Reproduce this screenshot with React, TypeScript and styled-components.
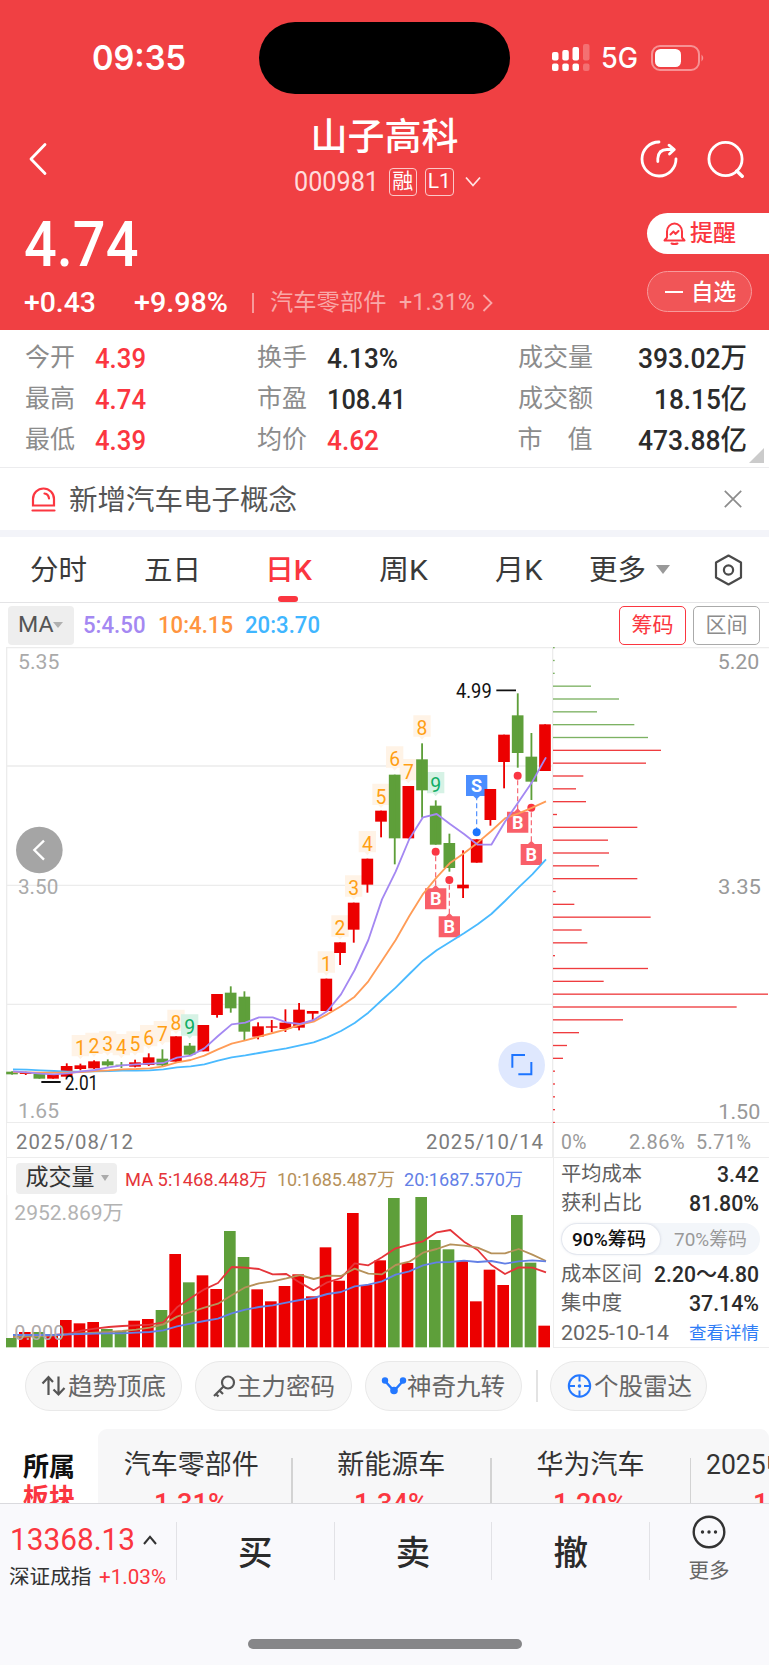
import React, { useLayoutEffect, useRef, useState } from "react";
import styled, { createGlobalStyle } from "styled-components";

const RED = "#fb3640";
const UP = "#ec0000";
const DOWN = "#5e9f3a";
const FONT = `Roboto, "Noto Sans CJK SC", sans-serif`;

const Global = createGlobalStyle`
  * { box-sizing: border-box; }
  body { margin: 0; background: #fff; font-family: ${FONT}; color: #333; }
  svg { display: block; flex: none; }
`;

/* ---------- text that is condensed or widened to a given width ---------- */

const FitBox = styled.div<{ $w: number; $ml: number }>`
  flex: none;
  width: ${(p) => p.$w}px;
  margin-left: ${(p) => p.$ml}px;
  white-space: nowrap;
`;
const FitInner = styled.span`
  display: inline-block;
  transform-origin: 0 50%;
`;

type FitProps = { w: number; ml?: number; className?: string; children: React.ReactNode };

function Fit({ w, ml = 0, className, children }: FitProps) {
  const ref = useRef<HTMLSpanElement>(null);
  const [scale, setScale] = useState(1);
  useLayoutEffect(() => {
    if (ref.current && ref.current.offsetWidth) setScale((w / ref.current.getBoundingClientRect().width) * scale);
  }, [w]);
  return (
    <FitBox className={className} $w={w} $ml={ml}>
      <FitInner ref={ref} style={{ transform: `scaleX(${scale})` }}>{children}</FitInner>
    </FitBox>
  );
}

/* ---------- page ---------- */

const Page = styled.div`
  width: 769px;
  height: 1665px;
  overflow: hidden;
  display: flex;
  flex-direction: column;
  background: #fff;
`;

const Header = styled.header`
  height: 330px;
  flex: none;
  background: #f04043;
  color: #fff;
`;
const StatusBar = styled.div`
  height: 113px;
  padding: 22px 0 19px 93px;
  display: flex;
  align-items: center;
`;
const Clock = styled(Fit)`
  font: 600 34px/40px Inter, sans-serif;
`;
const Island = styled.div`
  width: 251px;
  height: 72px;
  margin-left: 72.5px;
  border-radius: 36px;
  background: #000;
`;
const Network = styled(Fit)`
  font: 500 28px/40px Inter, sans-serif;
`;
const StatusIcon = styled.svg<{ $ml: number }>`
  margin-left: ${(p) => p.$ml}px;
`;

const NavBar = styled.nav`
  height: 92px;
  display: grid;
  grid-template-columns: 290px 349.7px auto;
  align-items: center;
`;
const BackIcon = styled.svg`
  margin-left: 29px;
`;
const StockName = styled(Fit)`
  padding-top: 2px;
  height: 45px;
  font-size: 37px;
  font-weight: 500;
  line-height: 45px;
`;
const CodeRow = styled.div`
  height: 47px;
  display: flex;
  align-items: center;
`;
const Code = styled(Fit)`
  font-size: 27px;
  line-height: 30px;
  color: #ffdcdc;
`;
const Badge = styled.div<{ $ml: number; $w: number }>`
  width: ${(p) => p.$w}px;
  height: 28px;
  margin-left: ${(p) => p.$ml}px;
  border: 1.5px solid #fbc8c8;
  border-radius: 4px;
  font-size: 21px;
  line-height: 25px;
  text-align: center;
`;
const NavActions = styled.div`
  display: flex;
  gap: 29px;
`;

const Quote = styled.div`
  display: flex;
  justify-content: space-between;
`;
const Price = styled(Fit)`
  font-size: 63px;
  font-weight: 500;
  line-height: 80px;
`;
const ChangeRow = styled.div`
  height: 36px;
  display: flex;
  align-items: center;
`;
const Change = styled(Fit)`
  font-size: 28px;
  font-weight: 500;
  line-height: 34px;
`;
const ChangeDivider = styled.i`
  width: 1.5px;
  height: 20px;
  margin-left: 24px;
  background: #f79a9b;
`;
const Sector = styled(Fit)`
  font-size: 23px;
  line-height: 34px;
  color: #f9a8a8;
`;
const QuoteActions = styled.div`
  width: 122.5px;
  padding-top: 8px;
  display: flex;
  flex-direction: column;
  gap: 17px;
`;
const AlertButton = styled.div`
  height: 41px;
  padding-left: 16.5px;
  display: flex;
  align-items: center;
  border-radius: 21px 0 0 21px;
  background: #fff;
  color: ${RED};
  font-size: 23px;
  line-height: 32px;
  font-weight: 500;
`;
const WatchButton = styled.div`
  width: 105.5px;
  height: 41px;
  padding-left: 17px;
  display: flex;
  align-items: center;
  border: 1.5px solid #f79a9b;
  border-radius: 21px;
  background: #f15557;
  font-size: 22.5px;
  line-height: 32px;
  font-weight: 500;
`;
const Minus = styled.i`
  width: 18px;
  height: 2px;
  margin-right: 8.5px;
  background: #fff;
`;

const Stats = styled.section`
  position: relative;
  height: 138px;
  flex: none;
  padding-top: 7px;
  display: grid;
  grid-template-columns: 232px 260.5px 1fr;
  padding-left: 25px;
  border-bottom: 1.5px solid #ececee;
`;
const StatRow = styled.div`
  height: 41px;
  display: flex;
  align-items: center;
`;
const StatLabel = styled(Fit)`
  font-size: 25px;
  line-height: 36px;
  color: #8c8c8c;
`;
const StatValue = styled(Fit)<{ $up?: boolean }>`
  padding-top: 2px;
  font-size: 28px;
  font-weight: 500;
  line-height: 36px;
  color: ${(p) => (p.$up ? RED : "#2b2b2b")};
`;
const WideStatRow = styled(StatRow)`
  justify-content: space-between;
  padding-right: 22px;
`;
const SplitLabel = styled.div`
  width: 75px;
  display: flex;
  justify-content: space-between;
  font-size: 25px;
  line-height: 36px;
  color: #8c8c8c;
`;
const Corner = styled.i`
  position: absolute;
  right: 5px;
  bottom: 4px;
  border-style: solid;
  border-width: 0 0 15px 15px;
  border-color: transparent transparent #cbcbcb transparent;
`;

const Notice = styled.section`
  height: 62px;
  flex: none;
  padding: 0 27.5px 0 31px;
  display: flex;
  align-items: center;
`;
const NoticeText = styled(Fit)`
  flex: 1;
  padding-top: 3px;
  font-size: 28.5px;
  line-height: 40px;
  color: #555;
`;
const Band = styled.div`
  height: 7px;
  flex: none;
  background: #f3f4f9;
`;

const Tabs = styled.nav`
  height: 66px;
  flex: none;
  display: flex;
  align-items: center;
  border-bottom: 1.5px solid #e4e4e6;
`;
const Tab = styled(Fit)<{ $active?: boolean }>`
  position: relative;
  height: 64px;
  font-size: 28.5px;
  font-weight: ${(p) => (p.$active ? 500 : 400)};
  line-height: 66px;
  color: ${(p) => (p.$active ? RED : "#3a3a3a")};
  ${(p) =>
    p.$active &&
    `&::after { content: ""; position: absolute; left: 13px; bottom: 0; width: 20px; height: 6px; border-radius: 3px; background: ${RED}; }`}
`;
const Triangle = styled.i<{ $size: number; $ml: number; $c?: string }>`
  margin-left: ${(p) => p.$ml}px;
  border-style: solid;
  border-width: ${(p) => p.$size * 1.35}px ${(p) => p.$size}px 0;
  border-color: ${(p) => p.$c || "#999"} transparent transparent;
`;
const SettingsIcon = styled.svg`
  margin-left: 43.5px;
`;

const MaBar = styled.div`
  height: 44px;
  flex: none;
  padding-left: 8px;
  display: flex;
  align-items: center;
`;
const MaSelect = styled.div`
  width: 66px;
  height: 39px;
  display: flex;
  align-items: center;
  border-radius: 4px;
  background: #eee;
  color: #555;
  font-size: 22px;
  line-height: 30px;
`;
const MaValue = styled(Fit)<{ $c: string }>`
  padding-top: 1px;
  font-size: 23px;
  line-height: 36px;
  font-weight: 500;
  color: ${(p) => p.$c};
`;
const ToggleButton = styled.div<{ $ml: number; $on?: boolean }>`
  width: 66.5px;
  height: 39px;
  margin-left: ${(p) => p.$ml}px;
  display: flex;
  align-items: center;
  justify-content: center;
  border: 1.5px solid ${(p) => (p.$on ? RED : "#aaa")};
  border-radius: 5px;
  color: ${(p) => (p.$on ? RED : "#8c8c8c")};
  font-size: 21px;
  line-height: 30px;
`;

const DateRow = styled.div`
  height: 35px;
  flex: none;
  margin-left: 6px;
  display: flex;
  align-items: center;
  border: 1.5px solid #ededed;
  border-width: 0 0 1.5px 1.5px;
`;
const DateText = styled(Fit)`
  padding-top: 4px;
  font-size: 21px;
  line-height: 30px;
  letter-spacing: 1px;
  color: #7c7c7c;
`;
const Scale = styled(DateText)`
  letter-spacing: 0.5px;
  color: #999;
`;
const DateSplit = styled.i`
  width: 1.5px;
  height: 35px;
  margin-left: 8px;
  background: #ededed;
`;

const Lower = styled.section`
  height: 190px;
  flex: none;
  display: flex;
`;
const Volume = styled.div`
  width: 553.5px;
  border-right: 1.5px solid #ededed;
`;
const VolumeBar = styled.div`
  height: 37px;
  margin-left: 6px;
  padding-left: 8.5px;
  display: flex;
  align-items: center;
  border-left: 1.5px solid #ededed;
`;
const VolumeSelect = styled.div`
  width: 101px;
  height: 31px;
  margin-top: 3px;
  display: flex;
  align-items: center;
  border-radius: 4px;
  background: #eee;
  font-size: 23px;
  line-height: 30px;
`;
const VolumeMa = styled(Fit)<{ $c: string }>`
  padding-top: 7px;
  font-size: 18.5px;
  line-height: 26px;
  color: ${(p) => p.$c};
`;

const Chips = styled.div`
  flex: 1;
  padding: 1px 10px 0 7px;
  border-bottom: 1.5px solid #ededed;
`;
const ChipRow = styled.div<{ $h: number }>`
  height: ${(p) => p.$h}px;
  display: flex;
  align-items: center;
  justify-content: space-between;
`;
const ChipLabel = styled(Fit)`
  font-size: 20px;
  line-height: 28px;
  color: #606060;
`;
const ChipValue = styled(Fit)`
  font-size: 22.5px;
  font-weight: 500;
  line-height: 28px;
  color: #2b2b2b;
`;
const ChipDate = styled(Fit)`
  font-size: 20px;
  line-height: 28px;
  color: #666;
`;
const DetailLink = styled(Fit)`
  font-size: 17.3px;
  line-height: 28px;
  color: #2f7df6;
`;
const Switch = styled.div`
  height: 32px;
  margin: 6px -1px 4px 0;
  display: flex;
  align-items: center;
  border-radius: 16px;
  background: #f3f6fa;
`;
const Knob = styled.div`
  width: 98px;
  height: 30px;
  margin-left: 1px;
  padding-left: 10.5px;
  border-radius: 15px;
  background: #fff;
  box-shadow: 0 0 3px rgba(120, 130, 160, 0.35);
`;
const SwitchText = styled(Fit)<{ $on?: boolean }>`
  font-size: 19px;
  line-height: 31px;
  font-weight: ${(p) => (p.$on ? 500 : 400)};
  color: ${(p) => (p.$on ? "#111" : "#999")};
`;

const Pills = styled.section`
  height: 81px;
  flex: none;
  padding: 13px 0 18px 25px;
  display: flex;
  align-items: center;
`;
const Pill = styled.div<{ $mr?: number }>`
  width: 157px;
  height: 50px;
  margin-right: ${(p) => p.$mr || 0}px;
  padding-left: 15px;
  display: flex;
  align-items: center;
  border: 1.5px solid #e9e9e9;
  border-radius: 25px;
  background: #f7f7f7;
`;
const PillText = styled(Fit)`
  padding-top: 1.5px;
  font-size: 24.4px;
  line-height: 36px;
  color: #666;
`;
const PillDivider = styled.i`
  width: 1.5px;
  height: 32px;
  margin-right: 12.5px;
  background: #e3e3e3;
`;

const Sectors = styled.section`
  height: 74px;
  flex: none;
  overflow: hidden;
  display: flex;
`;
const SectorTitle = styled.div`
  width: 98px;
  padding: 23px 0 0 23px;
  flex: none;
  font-size: 26px;
  font-weight: 700;
  line-height: 31px;
  color: #111;
`;
const SectorAccent = styled.div`
  color: ${RED};
`;
const SectorList = styled.div`
  width: 671px;
  display: flex;
  overflow: hidden;
  border-radius: 9px 9px 0 0;
  background: #f7f7f8;
`;
const SectorItem = styled.div<{ $w?: number }>`
  position: relative;
  width: ${(p) => p.$w || 199.3}px;
  flex: none;
  padding-top: 15px;
  display: flex;
  flex-direction: column;
  align-items: center;
  &:not(:last-child)::after {
    content: "";
    position: absolute;
    right: 0;
    top: 29px;
    width: 1.5px;
    height: 50px;
    background: #d3d3d3;
  }
`;
const SectorName = styled(Fit)`
  font-size: 27px;
  line-height: 42px;
  color: #333;
`;
const SectorChange = styled(Fit)`
  font-size: 27px;
  line-height: 36px;
  font-weight: 500;
  color: ${RED};
`;

const Footer = styled.footer`
  height: 162px;
  flex: none;
  border-top: 1.5px solid #dadade;
  background: #f9f9fc;
`;
const FooterBar = styled.div`
  height: 96px;
  display: flex;
`;
const IndexBox = styled.div`
  width: 176px;
  padding: 17px 0 0 9px;
`;
const IndexRow = styled.div`
  height: 37px;
  display: flex;
  align-items: center;
`;
const IndexValue = styled(Fit)`
  font-size: 31px;
  line-height: 38px;
  color: ${RED};
`;
const IndexName = styled(Fit)`
  font-size: 20.6px;
  line-height: 30px;
  color: #333;
`;
const IndexChange = styled(Fit)`
  font-size: 20.5px;
  line-height: 30px;
  color: ${RED};
`;
const Trade = styled.div`
  width: 157.7px;
  height: 58px;
  margin-top: 18px;
  padding-top: 9px;
  border-left: 1.5px solid #e2e2e6;
  text-align: center;
  font-size: 34.5px;
  line-height: 44px;
  font-weight: 500;
  color: #2b2b2b;
`;
const More = styled(Trade)`
  width: 119px;
  padding-top: 0;
  display: flex;
  flex-direction: column;
  align-items: center;
  font-size: 20.5px;
  line-height: 30px;
  font-weight: 400;
  color: #666;
  svg { margin: -7px 0 7px; }
`;
const HomeIndicator = styled.div`
  width: 274px;
  height: 10px;
  margin: 39px auto 0;
  border-radius: 5px;
  background: #868688;
`;

/* ---------- chart data, in thirds of a pixel ---------- */

const STEP = 41;
// [direction, open/close top, open/close bottom, high, low]
const candles: [0 | 1, number, number, number, number][] = [
  [0, 1274, 1282, 1273, 1283], [1, 1276, 1281, 1274, 1284], [0, 1281, 1295, 1281, 1295], [1, 1282, 1295, 1282, 1295],
  [1, 1257, 1289, 1249, 1291], [1, 1255, 1266, 1250, 1270], [1, 1243, 1264, 1240, 1266], [0, 1243, 1255, 1237, 1259],
  [0, 1253, 1256, 1245, 1263], [1, 1246, 1259, 1238, 1261], [1, 1231, 1254, 1219, 1257], [0, 1235, 1255, 1207, 1257],
  [1, 1168, 1244, 1168, 1244], [0, 1196, 1223, 1188, 1225], [1, 1134, 1213, 1134, 1213], [1, 1041, 1104, 1041, 1112],
  [0, 1037, 1084, 1018, 1097], [0, 1049, 1154, 1033, 1180], [1, 1138, 1169, 1126, 1177], [1, 1138, 1142, 1119, 1155],
  [1, 1127, 1146, 1087, 1155], [1, 1088, 1142, 1068, 1150], [1, 1092, 1100, 1092, 1119], [1, 995, 1092, 995, 1092],
  [1, 886, 918, 886, 954], [1, 767, 848, 767, 887], [1, 635, 713, 635, 737], [1, 491, 524, 491, 571],
  [0, 383, 574, 383, 652], [1, 417, 574, 417, 574], [0, 337, 430, 289, 512], [0, 476, 593, 460, 593],
  [0, 588, 663, 560, 674], [1, 713, 724, 610, 753], [1, 577, 647, 577, 647], [1, 426, 519, 426, 536],
  [1, 263, 345, 263, 424], [0, 205, 318, 139, 362], [0, 329, 404, 258, 459], [1, 232, 372, 232, 372],
];
const ma5 = [1273, 1276, 1280, 1282, 1279, 1273, 1269, 1261, 1255, 1252, 1250, 1248, 1232, 1226, 1204, 1167, 1132, 1127, 1111, 1111, 1126, 1131, 1119, 1092, 1042, 969, 879, 757, 674, 576, 511, 501, 532, 561, 593, 593, 524, 464, 404, 331];
const ma10 = [1275, 1276, 1277, 1277, 1277, 1275, 1272, 1270, 1267, 1266, 1264, 1258, 1246, 1239, 1226, 1207, 1190, 1180, 1169, 1158, 1147, 1133, 1124, 1102, 1078, 1049, 1003, 941, 879, 807, 741, 691, 647, 619, 587, 552, 514, 499, 482, 463];
const ma20 = [1267, 1268, 1270, 1272, 1274, 1274, 1273, 1272, 1271, 1271, 1270, 1267, 1261, 1258, 1252, 1241, 1231, 1225, 1218, 1211, 1204, 1195, 1186, 1171, 1152, 1128, 1097, 1059, 1022, 981, 941, 910, 884, 859, 832, 801, 762, 721, 682, 637];
// [candle index, tag top, label]
const tags: [number, number, string][] = [
  [5, 1164, "1"], [6, 1157, "2"], [7, 1153, "3"], [8, 1161, "4"], [9, 1153, "5"], [10, 1134, "6"], [11, 1122, "7"],
  [12, 1088, "8"], [13, 1102, "9"], [23, 913, "1"], [24, 805, "2"], [25, 685, "3"], [26, 552, "4"], [27, 410, "5"],
  [28, 298, "6"], [29, 336, "7"], [30, 205, "8"], [31, 375, "9"],
];
// [candle index, dot, box top, label]
const signals: [number, number, number, string][] = [
  [31, 614, 724, "B"], [32, 699, 808, "B"], [37, 386, 494, "B"], [38, 482, 591, "B"], [34, 556, 384, "S"],
];
const chips = [5, 5, 5, 114, 198, 132, 244, 285, 324, 279, 91, 69, 99, 12, 253, 165, 168, 138, 253, 8, 64, 293, 86, 103, 6, 285, 152, 645, 551, 210, 78, 42, 30, 6, 6, 6, 6, 6];

const volumes = [564, 546, 546, 558, 510, 520, 516, 537, 543, 512, 507, 480, 312, 397, 376, 417, 243, 321, 418, 454, 408, 373, 439, 292, 392, 189, 405, 331, 144, 339, 141, 270, 298, 333, 454, 359, 405, 195, 338, 527];
const vma5 = [556, 556, 555, 555, 552, 542, 536, 531, 528, 526, 524, 517, 472, 444, 418, 399, 351, 353, 357, 373, 372, 398, 421, 397, 384, 340, 346, 322, 295, 284, 274, 247, 240, 275, 300, 345, 372, 352, 353, 367];
const vma10 = [561, 560, 558, 556, 553, 550, 548, 546, 543, 539, 533, 523, 500, 486, 473, 461, 436, 412, 400, 394, 385, 375, 387, 377, 378, 356, 371, 373, 345, 335, 308, 297, 283, 287, 293, 310, 310, 297, 314, 333];
const vma20 = [555, 555, 555, 555, 553, 552, 551, 550, 550, 548, 546, 541, 529, 521, 513, 506, 490, 479, 471, 466, 458, 450, 444, 432, 426, 409, 404, 394, 374, 364, 346, 337, 336, 332, 336, 333, 341, 334, 331, 334];

const points = (ys: number[], dy = 0) => ys.map((y, i) => `${39 + STEP * i},${y + dy}`).join(" ");

const PriceChart = styled.svg`
  font-family: ${FONT};
`;

function Label({ x, y, w, size = 63, fill = "#aaa", children }: { x: number; y: number; w: number; size?: number; fill?: string; children: string }) {
  return (
    <text x={x} y={y} fontSize={size} fill={fill} textLength={w} lengthAdjust="spacingAndGlyphs">
      {children}
    </text>
  );
}

function KLine() {
  return (
    <PriceChart width="769" height="476" viewBox="0 0 2307 1428">
      <g stroke="#ececec" strokeWidth="4" fill="none">
        <path d="M20 2H2307M20 357H1659M20 715H1659M20 1072H1659M20 1427H2307M20 0V1428M1658 0V1428" />
      </g>
      {tags.map(([i, y, t], n) => {
        const green = t === "9";
        const x = 36 + STEP * i;
        return (
          <g key={n}>
            <path d={`M${x - 26} ${y}h52v64h-18l-8 9l-8-9h-18z`} fill={green ? "#d6f2e5" : "#fff3e6"} />
            <text x={x} y={y + 60} fontSize="58" textAnchor="middle" fill={green ? "#10ad64" : "#ff9f14"}>{t}</text>
          </g>
        );
      })}
      {signals.map(([i, dot, top, t], n) => {
        const x = 36 + STEP * i;
        const buy = t === "B";
        return (
          <g key={n}>
            <path d={buy ? `M${x} ${dot + 14}V${top}` : `M${x} ${dot}V${top + 70}`} stroke={buy ? "#f66470" : "#4a8cff"} strokeWidth="3.5" strokeDasharray="15 9" />
            <path
              d={buy ? `M${x - 32} ${top}h22l10-10l10 10h22v63h-64z` : `M${x - 32} ${top}h64v63h-22l-10 10l-10-10h-22z`}
              fill={buy ? "#f95f69" : "#4b8eff"}
            />
            <text x={x} y={top + 51} fontSize="54" fontWeight="700" textAnchor="middle" fill="#fff">{t}</text>
          </g>
        );
      })}
      {candles.map(([up, a, b, h, l], i) => {
        const x = 36 + STEP * i;
        return (
          <g key={i} fill={up ? UP : DOWN}>
            <rect x={x - 17.5} y={a} width="35" height={b - a} />
            <rect x={x - 2.5} y={h} width="5.5" height={l - h} />
          </g>
        );
      })}
      {signals.map(([i, dot, , t], n) => (
        <circle key={n} cx={36 + STEP * i} cy={dot} r="12" fill={t === "B" ? "#fa3643" : "#1b75ff"} />
      ))}
      <g fill="none" strokeWidth="5.5" strokeLinejoin="round">
        <polyline points={points(ma20)} stroke="#4abaff" />
        <polyline points={points(ma10)} stroke="#ff9c57" />
        <polyline points={points(ma5)} stroke="#a488f2" />
      </g>
      {chips.map((w, k) => (
        <rect key={k} x="1659" y={k * 38.5} width={w} height="4" fill={k < 8 ? "#7db263" : "#ef3c3f"} />
      ))}
      <path d="M1489 130h59M124 1305h58" stroke="#111" strokeWidth="5.5" />
      <Label x={1368} y={153} w={107} size={58} fill="#111">4.99</Label>
      <Label x={194} y={1329} w={101} size={58} fill="#111">2.01</Label>
      <Label x={54} y={66} w={124}>5.35</Label>
      <Label x={54} y={740} w={121}>3.50</Label>
      <Label x={54} y={1413} w={123}>1.65</Label>
      <Label x={2153} y={67} w={125} fill="#999">5.20</Label>
      <Label x={2154} y={742} w={129} fill="#999">3.35</Label>
      <Label x={2155} y={1415} w={126} fill="#999">1.50</Label>
      <circle cx="118" cy="609" r="70" fill="#a5a5a5" />
      <path d="M132 581L103 609L132 638" stroke="#fff" strokeWidth="7" fill="none" />
      <circle cx="1565" cy="1254" r="70" fill="#dfe8fe" />
      <path d="M1537 1262V1224H1575M1594 1245V1282H1555" stroke="#1d74ff" strokeWidth="6" fill="none" />
    </PriceChart>
  );
}

function VolumeChart() {
  return (
    <PriceChart width="552" height="153" viewBox="0 0 1656 459">
      <path d="M20 0V457" stroke="#ececec" strokeWidth="4" />
      {volumes.map((v, i) => {
        const x = i === 0 ? 18 : 16 + STEP * i;
        return <rect key={i} x={x} y={v - 135} width={i === 0 ? 32 : 35} height={592 - v} fill={candles[i][0] ? UP : DOWN} />;
      })}
      <g fill="none" strokeWidth="5.5" strokeLinejoin="round">
        <polyline points={points(vma5, -135)} stroke="#e5353a" />
        <polyline points={points(vma10, -135)} stroke="#b6915a" />
        <polyline points={points(vma20, -135)} stroke="#6380e6" />
      </g>
      <Label x={43} y={75} w={328} size={60} fill="#b3b3b3">2952.869万</Label>
      <Label x={43} y={436} w={150} size={62} fill="#b0aaaa">0.000</Label>
    </PriceChart>
  );
}

const smallStats = [
  [["今开", "4.39", 51, 1], ["最高", "4.74", 51, 1], ["最低", "4.39", 51, 1]],
  [["换手", "4.13%", 71, 0], ["市盈", "108.41", 79, 0], ["均价", "4.62", 52, 1]],
] as [string, string, number, number][][];

const bigStats: [string, string, number][] = [["成交量", "393.02万", 109], ["成交额", "18.15亿", 93], ["市值", "473.88亿", 109]];

const sectors: [string, string, number][] = [["汽车零部件", "1.31%", 135], ["新能源车", "1.34%", 108], ["华为汽车", "1.29%", 108]];

export default function App() {
  return (
    <Page>
      <Global />
      <Header>
        <StatusBar>
          <Clock w={94} ml={-1}>09:35</Clock>
          <Island />
          <StatusIcon $ml={42.2} width="38" height="28" viewBox="0 0 38 28" fill="#fff">
            <rect x="0" y="8" width="6.5" height="8.5" rx="2" />
            <rect x="10.3" y="6" width="6.5" height="10.5" rx="2" />
            <rect x="20.5" y="3" width="6.5" height="13.5" rx="2" />
            <rect x="31" y="0" width="6.5" height="16.5" rx="2" opacity=".25" />
            <rect x="0" y="19.5" width="6.5" height="7.5" rx="2" />
            <rect x="10.3" y="19.5" width="6.5" height="7.5" rx="2" />
            <rect x="20.5" y="19.5" width="6.5" height="7.5" rx="2" />
            <rect x="31" y="19.5" width="6.5" height="7.5" rx="2" opacity=".25" />
          </StatusIcon>
          <Network w={37} ml={11.5}>5G</Network>
          <StatusIcon $ml={12.8} width="55" height="26" viewBox="0 0 55 26">
            <rect x="1" y="1" width="47" height="24" rx="8" fill="none" stroke="#f79294" strokeWidth="2" />
            <rect x="4" y="4" width="26" height="18" rx="5.5" fill="#fff" />
            <path d="M50.5 9.5q3.5 3.5 0 7z" fill="#f79294" />
          </StatusIcon>
        </StatusBar>
        <NavBar>
          <BackIcon width="20" height="34" viewBox="0 0 20 34" fill="none" stroke="#fff" strokeWidth="2.8" strokeLinecap="round" strokeLinejoin="round">
            <path d="M16 2.5L2 17L16 31.5" />
          </BackIcon>
          <div>
            <StockName w={148} ml={20.5}>山子高科</StockName>
            <CodeRow>
              <Code w={85} ml={3.5}>000981</Code>
              <Badge $ml={10} $w={28.5}>融</Badge>
              <Badge $ml={7.5} $w={29.5}>L1</Badge>
              <StatusIcon $ml={10.5} width="16" height="12" viewBox="0 0 16 12" fill="none" stroke="#ffe3e3" strokeWidth="1.8">
                <path d="M1 1.5L8 9.5L15 1.5" />
              </StatusIcon>
            </CodeRow>
          </div>
          <NavActions>
            <svg width="38" height="38" viewBox="0 0 38 38" fill="none" stroke="#fff" strokeWidth="2.8" strokeLinecap="round" strokeLinejoin="round">
              <path d="M19 2A17 17 0 1 0 36 18.8" />
              <path d="M17.8 21.5V18.500Q18.500 9.500 27 9.500H33.500M29 5.200L34.300 9.500L29.500 14" />
            </svg>
            <svg width="38" height="38" viewBox="0 0 38 38" fill="none" stroke="#fff" strokeWidth="2.8" strokeLinecap="round">
              <circle cx="18.5" cy="19" r="16.6" />
              <path d="M29.8 31L35.2 36.2" strokeWidth="3.4" />
            </svg>
          </NavActions>
        </NavBar>
        <Quote>
          <div>
            <Price w={114.5} ml={24}>4.74</Price>
            <ChangeRow>
              <Change w={72} ml={24}>+0.43</Change>
              <Change w={94} ml={38}>+9.98%</Change>
              <ChangeDivider />
              <Sector w={116.5} ml={16.5}>汽车零部件</Sector>
              <Sector w={76} ml={12}>+1.31%</Sector>
              <StatusIcon $ml={7} width="12" height="18" viewBox="0 0 12 18" fill="none" stroke="#f9a8a8" strokeWidth="1.8">
                <path d="M1.5 1L9.5 9L1.5 17" />
              </StatusIcon>
            </ChangeRow>
          </div>
          <QuoteActions>
            <AlertButton>
              <svg width="23" height="23" viewBox="0 0 23 23" fill="none" stroke={RED} strokeWidth="2" strokeLinejoin="round" strokeLinecap="round">
                <path d="M1.5 18.5H21.5L19 15.5V9.5A7.5 8 0 0 0 4 9.5V15.5Z" />
                <path d="M8.5 21.5Q11.5 22.5 14.5 21.5M7.5 12.5L10.5 9.5L12.5 12L15.5 9" />
              </svg>
              <Fit w={46} ml={4}>提醒</Fit>
            </AlertButton>
            <WatchButton>
              <Minus />
              <Fit w={45}>自选</Fit>
            </WatchButton>
          </QuoteActions>
        </Quote>
      </Header>

      <Stats>
        {smallStats.map((col, c) => (
          <div key={c}>
            {col.map(([label, value, w, up]) => (
              <StatRow key={label}>
                <StatLabel w={50}>{label}</StatLabel>
                <StatValue w={w} ml={20} $up={!!up}>{value}</StatValue>
              </StatRow>
            ))}
          </div>
        ))}
        <div>
          {bigStats.map(([label, value, w]) => (
            <WideStatRow key={label}>
              {label.length === 2 ? (
                <SplitLabel><span>{label[0]}</span><span>{label[1]}</span></SplitLabel>
              ) : (
                <StatLabel w={75}>{label}</StatLabel>
              )}
              <StatValue w={w}>{value}</StatValue>
            </WideStatRow>
          ))}
        </div>
        <Corner />
      </Stats>

      <Notice>
        <svg width="25" height="25" viewBox="0 0 25 25" fill="none" stroke={RED} strokeWidth="2.2" strokeLinecap="round">
          <path d="M2 18.5V12A10.5 10.5 0 0 1 23 12V18.5ZM1.5 23.5H23.5M13.5 6.5Q17.5 7 18 11.5" />
        </svg>
        <NoticeText w={228} ml={13}>新增汽车电子概念</NoticeText>
        <svg width="18" height="18" viewBox="0 0 18 18" stroke="#8c8c8c" strokeWidth="1.7">
          <path d="M.8 .8L17.2 17.2M17.2 .8L.8 17.2" />
        </svg>
      </Notice>
      <Band />

      <Tabs>
        <Tab w={57} ml={29.5}>分时</Tab>
        <Tab w={57} ml={57.5}>五日</Tab>
        <Tab w={47} ml={63.5} $active>日K</Tab>
        <Tab w={49} ml={67}>周K</Tab>
        <Tab w={47.5} ml={67.5}>月K</Tab>
        <Tab w={57} ml={46}>更多</Tab>
        <Triangle $size={7} $ml={10.5} />
        <SettingsIcon width="29" height="32" viewBox="0 0 29 32" fill="none" stroke="#4a4a4a" strokeWidth="2.2" strokeLinejoin="round">
          <path d="M14.5 1.5L27 8.5V23.5L14.5 30.5L2 23.5V8.5Z" />
          <circle cx="14.5" cy="16" r="4.6" />
        </SettingsIcon>
      </Tabs>

      <MaBar>
        <MaSelect>
          <Fit w={35.5} ml={9.5}>MA</Fit>
          <Triangle $size={5} $ml={0} $c="#b0b0b0" />
        </MaSelect>
        <MaValue w={62.5} ml={9} $c="#a488f2">5:4.50</MaValue>
        <MaValue w={75} ml={12.5} $c="#ff9440">10:4.15</MaValue>
        <MaValue w={75} ml={12} $c="#3fb6ff">20:3.70</MaValue>
        <ToggleButton $ml={299.3} $on>筹码</ToggleButton>
        <ToggleButton $ml={7.5}>区间</ToggleButton>
      </MaBar>

      <KLine />

      <DateRow>
        <DateText w={118} ml={9}>2025/08/12</DateText>
        <DateText w={118} ml={292}>2025/10/14</DateText>
        <DateSplit />
        <Scale w={26} ml={7}>0%</Scale>
        <Scale w={56} ml={42}>2.86%</Scale>
        <Scale w={55.5} ml={11.5}>5.71%</Scale>
      </DateRow>

      <Lower>
        <Volume>
          <VolumeBar>
            <VolumeSelect>
              <Fit w={69} ml={10}>成交量</Fit>
              <Triangle $size={4.5} $ml={6} $c="#aaa" />
            </VolumeSelect>
            <VolumeMa w={142.5} ml={8} $c="#e5353a">MA 5:1468.448万</VolumeMa>
            <VolumeMa w={118} ml={10} $c="#b6915a">10:1685.487万</VolumeMa>
            <VolumeMa w={119} ml={9} $c="#6380e6">20:1687.570万</VolumeMa>
          </VolumeBar>
          <VolumeChart />
        </Volume>
        <Chips>
          <ChipRow $h={29}>
            <ChipLabel w={81}>平均成本</ChipLabel>
            <ChipValue w={42}>3.42</ChipValue>
          </ChipRow>
          <ChipRow $h={29}>
            <ChipLabel w={81}>获利占比</ChipLabel>
            <ChipValue w={70}>81.80%</ChipValue>
          </ChipRow>
          <Switch>
            <Knob><SwitchText w={74} $on>90%筹码</SwitchText></Knob>
            <SwitchText w={73} ml={14}>70%筹码</SwitchText>
          </Switch>
          <ChipRow $h={29}>
            <ChipLabel w={81}>成本区间</ChipLabel>
            <ChipValue w={105}>2.20～4.80</ChipValue>
          </ChipRow>
          <ChipRow $h={29}>
            <ChipLabel w={61}>集中度</ChipLabel>
            <ChipValue w={70}>37.14%</ChipValue>
          </ChipRow>
          <ChipRow $h={31}>
            <ChipDate w={108}>2025-10-14</ChipDate>
            <DetailLink w={70}>查看详情</DetailLink>
          </ChipRow>
        </Chips>
      </Lower>

      <Pills>
        <Pill $mr={13}>
          <svg width="25" height="22" viewBox="0 0 25 22" fill="none" stroke="#555" strokeWidth="2.2">
            <path d="M7.5 20V2.5M1.5 8.5L7.5 2.2L12 7M17.5 1.5V19M12.5 14.5L17.5 19.5L23.5 13" />
          </svg>
          <PillText w={98} ml={1.5}>趋势顶底</PillText>
        </Pill>
        <Pill $mr={13}>
          <svg width="25" height="24" viewBox="0 0 25 24" fill="none" stroke="#555" strokeWidth="2.2">
            <circle cx="17" cy="8.5" r="6" />
            <path d="M12.5 12.5L3 22M8.5 16.5L12 20M5 20L7.5 22.5" />
          </svg>
          <PillText w={98} ml={1}>主力密码</PillText>
        </Pill>
        <Pill $mr={14}>
          <svg width="26" height="22" viewBox="0 0 26 22">
            <path d="M4 6L13 16L22 6" fill="none" stroke="#2478ff" strokeWidth="2.5" />
            <circle cx="4" cy="5.5" r="3.2" fill="#2478ff" />
            <circle cx="13" cy="15.5" r="3.8" fill="#2478ff" />
            <circle cx="22" cy="5.5" r="3.2" fill="#2478ff" />
          </svg>
          <PillText w={98} ml={0}>神奇九转</PillText>
        </Pill>
        <PillDivider />
        <Pill>
          <svg width="26" height="24" viewBox="0 0 26 24" fill="none" stroke="#2478ff" strokeWidth="2">
            <circle cx="13.5" cy="12" r="10.7" />
            <path d="M13.5 1V7.5M13.5 16.5V23M2.5 12H9M18 12H24.5" />
            <circle cx="13.5" cy="12" r="1.8" fill="#2478ff" stroke="none" />
          </svg>
          <PillText w={98} ml={1.5}>个股雷达</PillText>
        </Pill>
      </Pills>

      <Sectors>
        <SectorTitle>
          <Fit w={52}>所属</Fit>
          <SectorAccent><Fit w={52}>板块</Fit></SectorAccent>
        </SectorTitle>
        <SectorList>
          {sectors.map(([name, change, w], i) => (
            <SectorItem key={name} $w={i === 0 ? 194.5 : 199.3}>
              <SectorName w={w} ml={i === 0 ? -8 : -2}>{name}</SectorName>
              <SectorChange w={74} ml={i === 0 ? -8 : -2}>{change}</SectorChange>
            </SectorItem>
          ))}
          <SectorItem>
            <SectorName w={166} ml={-4}>2025中报预增</SectorName>
            <SectorChange w={74} ml={-2}>1.05%</SectorChange>
          </SectorItem>
        </SectorList>
      </Sectors>

      <Footer>
        <FooterBar>
          <IndexBox>
            <IndexRow>
              <IndexValue w={125} ml={1}>13368.13</IndexValue>
              <StatusIcon $ml={7.5} width="14" height="10" viewBox="0 0 14 10" fill="none" stroke="#333" strokeWidth="2">
                <path d="M1 9L7 1.8L13 9" />
              </StatusIcon>
            </IndexRow>
            <IndexRow>
              <IndexName w={82.5}>深证成指</IndexName>
              <IndexChange w={67} ml={7.5}>+1.03%</IndexChange>
            </IndexRow>
          </IndexBox>
          <Trade>买</Trade>
          <Trade>卖</Trade>
          <Trade>撤</Trade>
          <More>
            <svg width="34" height="34" viewBox="0 0 34 34">
              <circle cx="17" cy="17" r="15.3" fill="none" stroke="#333" strokeWidth="2.4" />
              <circle cx="10.5" cy="17" r="1.7" fill="#333" />
              <circle cx="17" cy="17" r="1.7" fill="#333" />
              <circle cx="23.5" cy="17" r="1.7" fill="#333" />
            </svg>
            更多
          </More>
        </FooterBar>
        <HomeIndicator />
      </Footer>
    </Page>
  );
}
